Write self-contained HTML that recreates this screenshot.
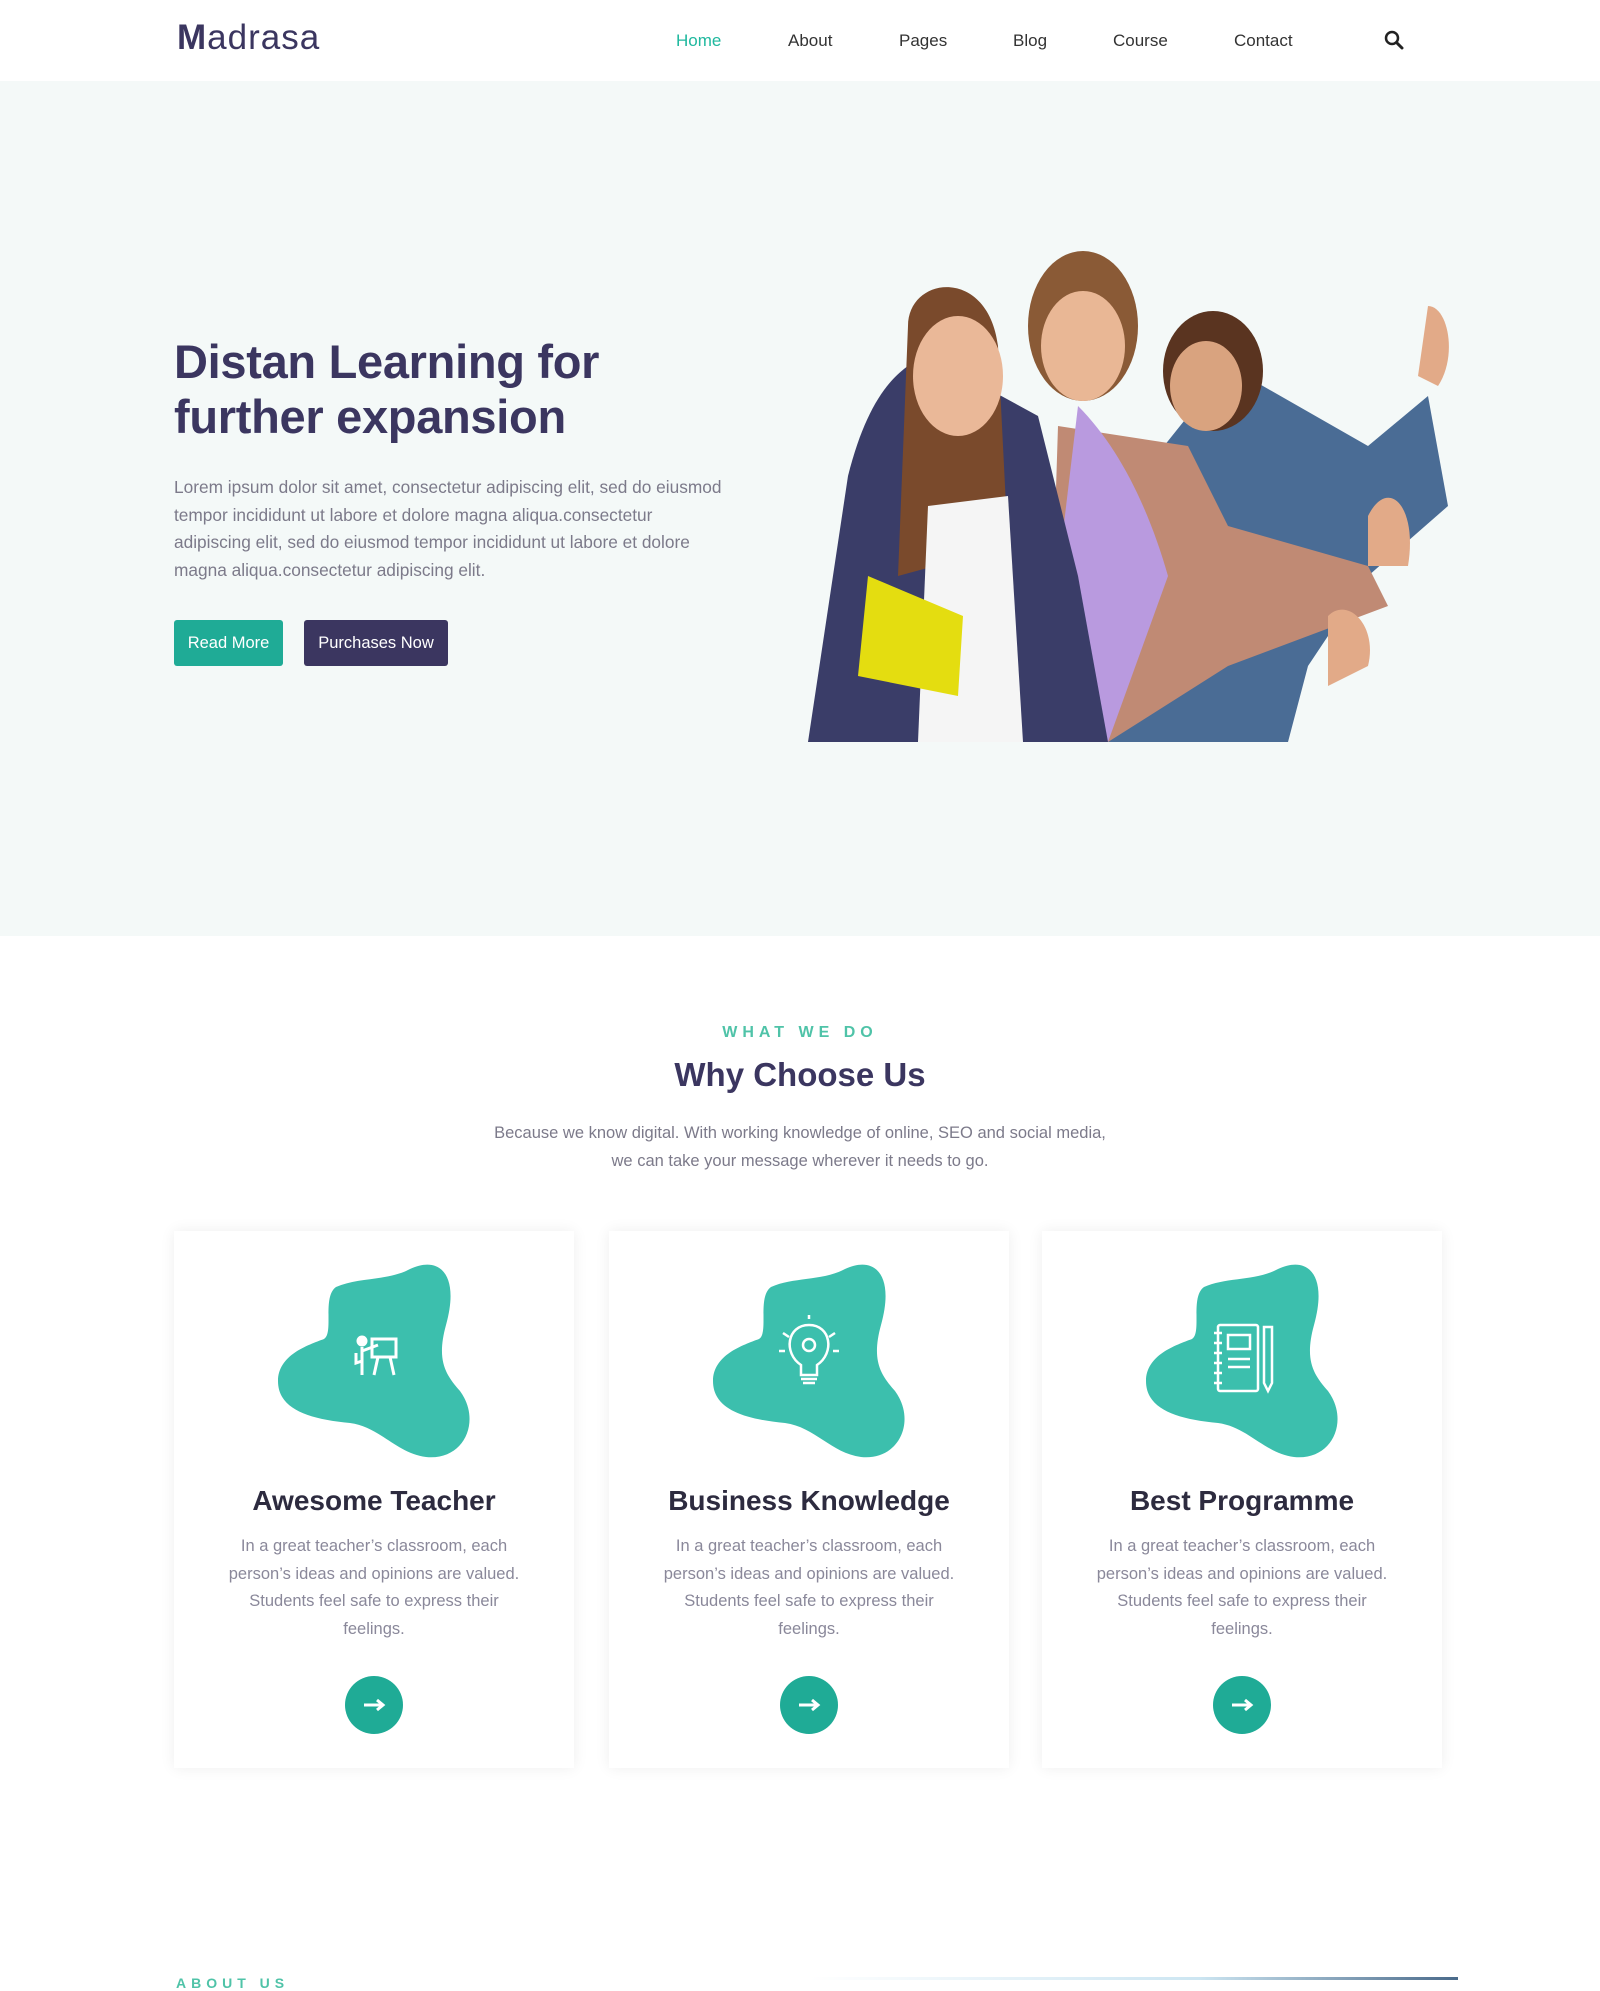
<!DOCTYPE html>
<html><head><meta charset="utf-8"><style>
*{margin:0;padding:0;box-sizing:border-box}
body{width:1600px;height:1980px;overflow:hidden;background:#fff;font-family:"Liberation Sans",sans-serif;position:relative}
.abs{position:absolute}
header{position:absolute;top:0;left:0;width:1600px;height:81px;background:#fff}
.logo{left:177px;top:18px;font-size:35px;color:#3b3660;letter-spacing:1px}
.logo b{font-weight:bold}
.nav a{position:absolute;top:31px;font-size:17px;color:#333;text-decoration:none}
.hero{top:81px;left:0;width:1600px;height:855px;background:#f4f9f8}
h1{position:absolute;left:174px;top:334px;font-size:47px;line-height:55px;color:#3b3660;font-weight:bold;letter-spacing:-0.3px}
.hp{left:174px;top:474px;width:700px;font-size:17.3px;line-height:27.5px;color:#7c7a8a}
.btn{position:absolute;top:620px;height:46px;line-height:46px;color:#fff;font-size:16.5px;text-align:center;border-radius:3px}
.sub{top:1024px;width:1600px;text-align:center;color:#4fc3a8;font-size:16px;letter-spacing:5px;font-weight:bold}
.h2{top:1056px;width:1600px;text-align:center;color:#3b3660;font-size:33px;font-weight:bold}
.sp{top:1119px;width:1600px;text-align:center;color:#7c7a8a;font-size:16.5px;line-height:28px}
.card{top:1231px;width:400px;height:537px;background:#fff;box-shadow:0 0 14px rgba(0,0,0,.07)}
.card svg.blob{position:absolute;left:104px;top:32px}
.card h3{position:absolute;top:254px;width:100%;text-align:center;font-size:28px;color:#2d2b3f;font-weight:bold}
.card p{position:absolute;top:302px;left:0;width:100%;text-align:center;font-size:16.5px;line-height:27.5px;color:#8a889a}
.circ{position:absolute;left:171px;top:445px;width:58px;height:58px;border-radius:50%;background:#1fab96}
</style></head><body>
<header>
<div class="abs logo"><b>M</b>adrasa</div>
<div class="nav">
<a style="left:676px;color:#1fb89e">Home</a><a style="left:788px">About</a><a style="left:899px">Pages</a><a style="left:1013px">Blog</a><a style="left:1113px">Course</a><a style="left:1234px">Contact</a>
</div>
<svg class="abs" style="left:1384px;top:30px" width="20" height="20" viewBox="0 0 20 20"><circle cx="8" cy="8" r="6" fill="none" stroke="#222" stroke-width="2.5"/><path d="M12.5 12.5L18 18" stroke="#222" stroke-width="3" stroke-linecap="round"/></svg>
</header>
<div class="abs hero"></div>
<h1>Distan Learning for<br>further expansion</h1>
<div class="abs hp">Lorem ipsum dolor sit amet, consectetur adipiscing elit, sed do eiusmod<br>tempor incididunt ut labore et dolore magna aliqua.consectetur<br>adipiscing elit, sed do eiusmod tempor incididunt ut labore et dolore<br>magna aliqua.consectetur adipiscing elit.</div>
<div class="btn" style="left:174px;width:109px;background:#1fab96">Read More</div>
<div class="btn" style="left:304px;width:144px;background:#3b3660">Purchases Now</div>
<svg class="abs" style="left:808px;top:246px" width="653" height="496" viewBox="0 0 653 496">
<path d="M420 120 L560 200 L620 150 L640 260 L560 330 L500 420 L480 496 L270 496 L260 320 Z" fill="#4a6c95"/>
<path d="M250 180 L380 200 L420 280 L560 320 L580 360 L420 420 L300 496 L240 496 Z" fill="#c08a74"/>
<path d="M270 160 C310 200 340 260 360 330 L300 496 L230 496 Z" fill="#b99adf"/>
<ellipse cx="275" cy="80" rx="55" ry="75" fill="#8a5a36"/><ellipse cx="275" cy="100" rx="42" ry="55" fill="#e9b795"/>
<ellipse cx="405" cy="125" rx="50" ry="60" fill="#5a3420"/><ellipse cx="398" cy="140" rx="36" ry="45" fill="#d9a37f"/>
<path d="M40 230 C60 150 90 120 120 110 L230 170 L270 330 L300 496 L0 496 Z" fill="#3a3d68"/>
<path d="M100 80 C100 30 180 20 190 100 L200 300 L90 330 Z" fill="#7a4a2c"/>
<ellipse cx="150" cy="130" rx="45" ry="60" fill="#eab898"/>
<path d="M120 260 L200 250 L215 496 L110 496 Z" fill="#f5f5f5"/>
<path d="M60 330 L155 370 L150 450 L50 430 Z" fill="#e4dd10"/>
<path d="M520 370 C540 350 570 380 560 420 L520 440 Z" fill="#e2aa88"/>
<path d="M560 270 C580 230 610 260 600 320 L560 320 Z" fill="#e2aa88"/>
<path d="M620 60 C640 60 650 110 630 140 L610 130 Z" fill="#e2aa88"/>
</svg>
<div class="abs sub">WHAT WE DO</div>
<div class="abs h2">Why Choose Us</div>
<div class="abs sp">Because we know digital. With working knowledge of online, SEO and social media,<br>we can take your message wherever it needs to go.</div>

<div class="abs card" style="left:174px">
<svg class="blob" width="192" height="196" viewBox="0 0 192 196"><path d="M58 24 C80 14 110 18 132 6 C162 -8 182 12 168 62 C158 98 168 112 182 128 C204 158 186 198 148 194 C118 190 102 164 72 160 C30 156 0 146 0 118 C0 92 30 82 46 76 C56 70 44 34 58 24Z" fill="#3cbfad"/>
<g fill="none" stroke="#fff" stroke-width="3"><circle cx="84" cy="78" r="4" fill="#fff"/><path d="M84 84 V112 M78 90 V100 L84 98 M84 88 L100 82"/><rect x="94" y="76" width="24" height="18"/><path d="M100 94 L96 112 M112 94 L116 112"/></g></svg>
<h3>Awesome Teacher</h3>
<p>In a great teacher’s classroom, each<br>person’s ideas and opinions are valued.<br>Students feel safe to express their<br>feelings.</p>
<div class="circ"><svg width="58" height="58" viewBox="0 0 58 58"><path d="M19 29 H37 M32 24 L38 29 L32 34" stroke="#fff" stroke-width="3" fill="none"/></svg></div>
</div>

<div class="abs card" style="left:609px">
<svg class="blob" width="192" height="196" viewBox="0 0 192 196"><path d="M58 24 C80 14 110 18 132 6 C162 -8 182 12 168 62 C158 98 168 112 182 128 C204 158 186 198 148 194 C118 190 102 164 72 160 C30 156 0 146 0 118 C0 92 30 82 46 76 C56 70 44 34 58 24Z" fill="#3cbfad"/>
<g fill="none" stroke="#fff" stroke-width="2.5"><path d="M88 102 C70 90 74 62 96 62 C118 62 122 90 104 102 V112 H88 Z"/><circle cx="96" cy="82" r="6"/><path d="M88 116 H104 M90 120 H102 M70 70 L76 74 M122 70 L116 74 M66 88 H72 M120 88 H126 M96 52 V56"/></g></svg>
<h3>Business Knowledge</h3>
<p>In a great teacher’s classroom, each<br>person’s ideas and opinions are valued.<br>Students feel safe to express their<br>feelings.</p>
<div class="circ"><svg width="58" height="58" viewBox="0 0 58 58"><path d="M19 29 H37 M32 24 L38 29 L32 34" stroke="#fff" stroke-width="3" fill="none"/></svg></div>
</div>

<div class="abs card" style="left:1042px">
<svg class="blob" width="192" height="196" viewBox="0 0 192 196"><path d="M58 24 C80 14 110 18 132 6 C162 -8 182 12 168 62 C158 98 168 112 182 128 C204 158 186 198 148 194 C118 190 102 164 72 160 C30 156 0 146 0 118 C0 92 30 82 46 76 C56 70 44 34 58 24Z" fill="#3cbfad"/>
<g fill="none" stroke="#fff" stroke-width="2.5"><rect x="72" y="62" width="40" height="66" rx="2"/><path d="M68 70 H76 M68 80 H76 M68 90 H76 M68 100 H76 M68 110 H76 M68 120 H76"/><rect x="82" y="72" width="22" height="14"/><path d="M82 96 H104 M82 104 H104"/><path d="M118 64 H126 V120 L122 128 L118 120 Z"/></g></svg>
<h3>Best Programme</h3>
<p>In a great teacher’s classroom, each<br>person’s ideas and opinions are valued.<br>Students feel safe to express their<br>feelings.</p>
<div class="circ"><svg width="58" height="58" viewBox="0 0 58 58"><path d="M19 29 H37 M32 24 L38 29 L32 34" stroke="#fff" stroke-width="3" fill="none"/></svg></div>
</div>

<div class="abs" style="left:176px;top:1975px;font-size:14px;color:#4fc3a8;letter-spacing:5px;font-weight:bold">ABOUT US</div>
<div class="abs" style="left:810px;top:1977px;width:648px;height:3px;background:linear-gradient(90deg,#fff,#cde6f2 60%,#4a6a8a)"></div>
</body></html>
